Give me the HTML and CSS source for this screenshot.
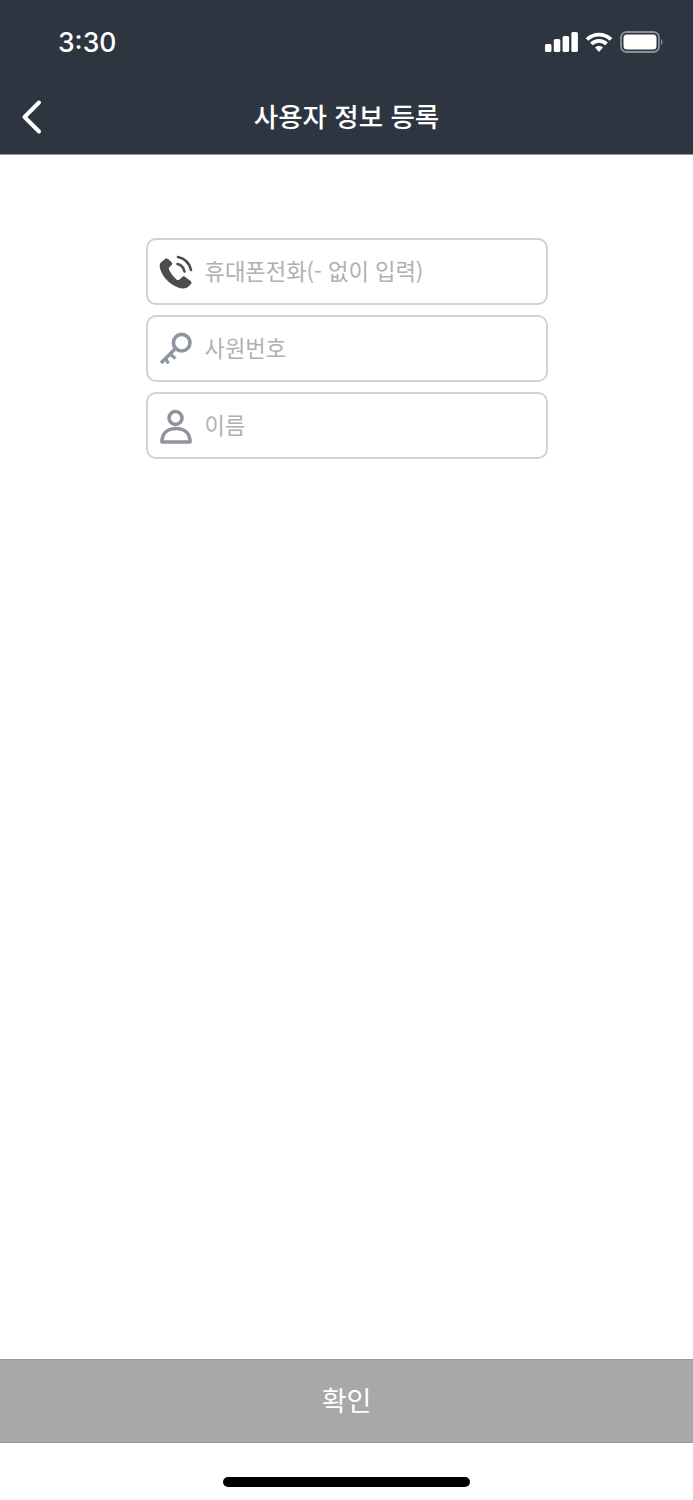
FILE: index.html
```html
<!DOCTYPE html>
<html lang="ko">
<head>
  <meta charset="UTF-8" />
  <meta name="viewport" content="width=device-width, initial-scale=1" />
  <title>사용자 정보 등록</title>
  <link rel="stylesheet" href="styles.css">
</head>
<body>
  <header class="app-header">
    <div class="status-bar">
      <span class="status-time">3:30</span>
      <div class="status-icons">
        <svg class="icon-signal" width="33" height="20" viewBox="0 0 33 20" aria-hidden="true">
          <rect x="0" y="12" width="6.500" height="8" rx="1.500"/>
          <rect x="8.800" y="7" width="6.500" height="13" rx="1.500"/>
          <rect x="17.600" y="4" width="6.500" height="16" rx="1.500"/>
          <rect x="26.400" y="0" width="6.500" height="20" rx="1.500"/>
        </svg>
        <svg class="icon-wifi" width="28" height="20" viewBox="0 0 28 20" aria-hidden="true">
          <path d="M2 7.500a17 17 0 0 1 24 0" />
          <path d="M6.500 12a10.500 10.500 0 0 1 15 0" />
          <path class="wifi-dot" d="M14 20l-4-4.400a5.500 5.500 0 0 1 8 0z" />
        </svg>
        <svg class="icon-battery" width="44" height="22" viewBox="0 0 44 22" aria-hidden="true">
          <rect class="battery-shell" x="1" y="1" width="38" height="20" rx="5.500"/>
          <rect class="battery-fill" x="3.500" y="3.500" width="33" height="15" rx="3.500"/>
          <path class="battery-tip" d="M41 8v6a3 3 0 0 0 1.500-3 3 3 0 0 0-1.500-3z"/>
        </svg>
      </div>
    </div>
    <div class="nav-bar">
      <a href="#" class="back-btn" aria-label="뒤로">
        <svg width="24" height="36" viewBox="0 0 24 36" aria-hidden="true">
          <path d="M19 3.500 4.500 18 19 32.500" />
        </svg>
      </a>
      <h1 class="nav-title">사용자 정보 등록</h1>
    </div>
  </header>

  <main class="content">
    <form class="register-form" novalidate>
      <label class="field">
        <svg class="field-icon" width="36" height="36" viewBox="0 0 36 36" aria-hidden="true">
          <path class="phone" d="M7 5 2.800 8.500C1.200 10 1.500 13 2.500 16 5 23 11 30 20 33.500c4 1.500 8 1.500 11-1.500l2-2c.8-1 .6-2-.2-2.800L27 22.800c-1-.8-2-.7-2.800.1l-2.700 2.500c-1 .8-2 .7-3 0-3.500-2.900-6-6.400-7.500-9.900-.4-1-.2-1.700.6-2.500l2-2c.8-.8.8-1.600.2-2.500L10.400 5.200C9.400 4.200 8.200 4.200 7 5z"/>
          <path class="waves" d="M19.500 10c3.500.8 6 3.500 7 7.500M20 3c6.500 1.500 11.500 6.500 13 13"/>
        </svg>
        <input type="text" placeholder="휴대폰전화(- 없이 입력)">
      </label>
      <label class="field">
        <svg class="field-icon" width="36" height="36" viewBox="0 0 36 36" aria-hidden="true">
          <circle class="key" cx="23.700" cy="11.700" r="8.300"/>
          <path class="key" d="M17.500 17.500 3 32"/>
          <path class="key-teeth" d="M7.500 27.500l3 5M12 23l5.500 4.500"/>
        </svg>
        <input type="text" placeholder="사원번호">
      </label>
      <label class="field">
        <svg class="field-icon" width="36" height="36" viewBox="0 0 36 36" aria-hidden="true">
          <circle class="person" cx="17.500" cy="10" r="6.500"/>
          <path class="person" d="M4 34c0-9 6-13.500 14-13.500S32 25 32 34z"/>
        </svg>
        <input type="text" placeholder="이름">
      </label>
    </form>
  </main>

  <button type="button" class="confirm-btn">확인</button>
  <div class="home-area"><span class="home-indicator"></span></div>
</body>
</html>
```

FILE: styles.css
```css
/* Reset and base */
*, *::before, *::after {
  box-sizing: border-box;
}
html, body {
  height: 100%;
}
body {
  margin: 0;
  display: flex;
  flex-direction: column;
  min-height: 1500px;
  background: #fff;
  font-family: "Noto Sans CJK KR", "Noto Sans", sans-serif;
}

/* HEADER */
.app-header {
  height: 155px;
  background: #2d3540;
  color: #fff;
  border-bottom: 1px solid #8f96a3;
}
.status-bar {
  height: 78px;
  padding: 6px 29px 0 58px;
  display: flex;
  align-items: center;
  justify-content: space-between;
}
.status-time {
  font-family: Inter, "Liberation Sans", sans-serif;
  font-size: 26.500px;
  font-weight: 500;
}
.status-icons {
  display: flex;
  align-items: center;
  gap: 7px;
}
.icon-signal {
  fill: #fff;
}
.icon-wifi path {
  fill: none;
  stroke: #fff;
  stroke-width: 3.800;
}
.icon-wifi .wifi-dot {
  fill: #fff;
  stroke: none;
}
.battery-shell {
  fill: none;
  stroke: #8b9098;
  stroke-width: 1.800;
}
.battery-fill {
  fill: #fff;
}
.battery-tip {
  fill: #8b9098;
}

.nav-bar {
  position: relative;
  height: 76px;
  display: flex;
  align-items: center;
  justify-content: center;
}
.back-btn {
  position: absolute;
  left: 20px;
  top: 21px;
  display: flex;
}
.back-btn path {
  fill: none;
  stroke: #fff;
  stroke-width: 4;
  stroke-linecap: round;
  stroke-linejoin: round;
}
.nav-title {
  margin: 0 0 2px;
  font-size: 26.500px;
  font-weight: 500;
}

/* FORM */
.content {
  flex-grow: 1;
  display: flex;
  justify-content: center;
  padding-top: 83px;
}
.register-form {
  width: 402px;
  display: flex;
  flex-direction: column;
  gap: 10px;
}
.field {
  height: 67px;
  display: flex;
  align-items: center;
  gap: 11px;
  padding-left: 10px;
  border: 2px solid #d0d2d6;
  border-radius: 10px;
  background: #fff;
}
.field-icon {
  flex-shrink: 0;
}
.field input {
  flex: 1;
  min-width: 0;
  border: none;
  outline: none;
  padding: 0;
  margin-bottom: 3px;
  background: transparent;
  font-family: inherit;
  font-size: 22.200px;
  color: #333;
}
.field input::placeholder {
  color: #b0b0b0;
  opacity: 1;
}
.phone {
  fill: #4a4c50;
}
.waves {
  fill: none;
  stroke: #4a4c50;
  stroke-width: 2.600;
  stroke-linecap: round;
}
.key {
  fill: none;
  stroke: #8f95a0;
  stroke-width: 3.600;
}
.key-teeth {
  fill: none;
  stroke: #8f95a0;
  stroke-width: 3.200;
}
.person {
  fill: none;
  stroke: #8f949c;
  stroke-width: 3.600;
  stroke-linejoin: round;
}

/* BOTTOM */
.confirm-btn {
  height: 84px;
  width: 100%;
  flex-shrink: 0;
  border: none;
  border-top: 1px solid #999;
  border-bottom: 1px solid #999;
  padding: 0 0 3px;
  background: #a8a8a8;
  color: #fff;
  font-family: inherit;
  font-size: 27px;
}
.home-area {
  height: 57px;
  flex-shrink: 0;
  display: flex;
  justify-content: center;
  padding-top: 34px;
}
.home-indicator {
  width: 247px;
  height: 10px;
  border-radius: 5px;
  background: #000;
}
```
